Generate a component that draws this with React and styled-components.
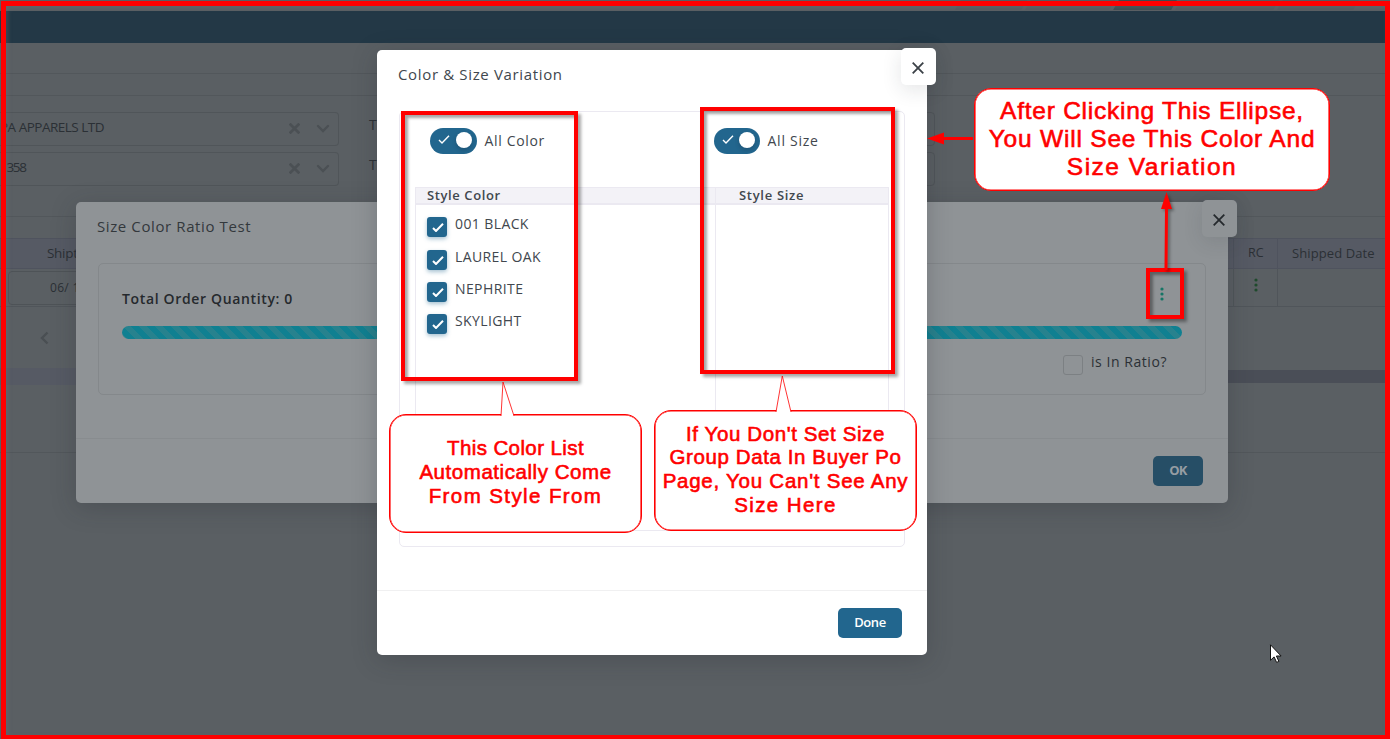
import React from "react";
import styled, { createGlobalStyle } from "styled-components";

const Global = createGlobalStyle`
  * { box-sizing: border-box; }
  body { margin: 0; overflow: hidden; background: #5a5f63; font-family: "Open Sans", "Noto Sans", sans-serif; color: #3b4147; }
`;

const Screen = styled.div`position: relative; width: 1390px; height: 739px; overflow: hidden; background: #5a5f63;`;
const Text = styled.span`
  font-size: ${p => p.$size || 14}px; line-height: 20px; white-space: nowrap;
  font-weight: ${p => p.$weight || 400}; letter-spacing: ${p => p.$gap ?? 0.5}px; color: ${p => p.$color || "#41474e"};
`;

/* page behind the dialogs */
const Page = styled.div`display: flex; flex-direction: column; height: 739px;`;
const Tabs = styled.div`height: 11px; display: flex; justify-content: flex-end; gap: 4px; padding-right: 34px;`;
const Tab = styled.div`width: ${p => p.$w}px; height: 10px; transform: skewX(-30deg); background: ${p => (p.$on ? "#3c4d50" : "#565b5f")};`;
const NavBar = styled.div`height: 32px; background: #233846;`;
const Strip = styled.div`height: ${p => p.$h}px; border-bottom: 1px solid #52575b;`;
const Form = styled.div`display: grid; grid-template-columns: 339px 596px; row-gap: 6px; padding-top: 16px; height: 121px; align-content: start; border-bottom: 1px solid #52575b;`;
const Select = styled.div`
  height: 34px; display: flex; align-items: center; border: 1px solid #505559; border-left: 0; border-radius: 0 4px 4px 0;
  padding: 0 8px 4px ${p => p.$left || 0}px;
  svg { margin-top: 3px; }
  svg:first-of-type { margin-left: auto; margin-right: 16px; }
`;
const Field = styled.div`display: flex; padding-left: 30px; gap: 20px; > span { padding-top: 3px; }`;
const FieldBox = styled(Select)`flex: 1; border-left: 1px solid #505559;`;
const Table = styled.div`display: grid; grid-template-columns: 1234px 44px 1fr; margin-top: 21px;`;
const Th = styled.div`height: 31px; background: #565a64; border: solid #4f535e; border-width: 1px 1px 1px 0; display: flex; align-items: center; padding: 0 0 2px ${p => p.$left}px;`;
const Td = styled.div`height: 38px; border: solid #50555a; border-width: 0 1px 1px 0; display: flex; align-items: center; padding-left: ${p => p.$left}px; padding-bottom: ${p => p.$up || 0}px;`;
const DateBox = styled.div`width: 140px; height: 34px; border: 1px solid #4e5357; border-radius: 4px; display: flex; align-items: center; padding-left: 41px;`;
const Pager = styled.div`height: 61px; padding: 24px 0 0 40px; svg { display: block; }`;
const ScrollTrack = styled.div`height: 17px; display: grid; grid-template-columns: 800px 1fr; background: #565a64; align-items: center;`;
const ScrollThumb = styled.div`grid-column: 2; height: 13px; background: #4a4e57; box-shadow: 0 0 0 2px #5a5f63;`;

/* dialogs */
const Layer = styled.div`position: absolute; inset: 0; padding: ${p => p.$top}px 0 0 ${p => p.$left}px;`;
const Dialog = styled.section`
  position: relative; width: ${p => p.$w}px; height: ${p => p.$h}px; border-radius: 5px; display: flex; flex-direction: column;
  background: ${p => (p.$dim ? "#8f9396" : "#fff")}; box-shadow: 0 5px 24px rgba(34, 41, 47, 0.25);
`;
const Close = styled.div`
  position: absolute; right: -9px; top: -2px; width: 35px; height: 37px; border-radius: 5px; display: flex; align-items: center; justify-content: center; padding: 2px 1px 0 0;
  background: ${p => (p.$dim ? "#8f9396" : "#fff")}; box-shadow: 0 5px 20px rgba(34, 41, 47, 0.12);
`;
const Title = styled.header`padding: 13px 21px 0; height: ${p => p.$h}px;`;
const Footer = styled.footer`margin-top: auto; height: 65px; display: flex; justify-content: flex-end; align-items: center; padding-right: 25px; border-top: 1px solid ${p => (p.$dim ? "#888c8f" : "#f0f0f1")};`;
const Button = styled.div`
  width: ${p => p.$w}px; height: 30px; border-radius: 5px; display: flex; align-items: center; justify-content: center; padding-bottom: 2px;
  background: ${p => (p.$dim ? "#264e66" : "#22668e")};
`;
const RatioCard = styled.div`margin: 0 22px; height: 132px; border: 1px solid #84888b; border-radius: 5px; padding: 25px 23px 0; display: flex; flex-direction: column;`;
const Row = styled.div`display: flex; justify-content: space-between; align-items: center;`;
const DotsCell = styled.div`padding-right: 18px; display: flex; margin-top: -11px;`;
const Progress = styled.div`
  margin-top: 17px; height: 13px; border-radius: 7px; background-color: #108091;
  background-image: linear-gradient(45deg, #27828e 25%, transparent 25%, transparent 50%, #27828e 50%, #27828e 75%, transparent 75%);
  background-size: 16px 16px;
`;
const RatioRow = styled.div`display: flex; justify-content: flex-end; gap: 8px; margin-top: 13px; padding-right: 15px;`;
const EmptyBox = styled.div`width: 20px; height: 20px; margin-top: 3px; border: 1px solid #7c8083; border-radius: 3px;`;

const VariationCard = styled.div`margin: 0 22px; height: 436px; border: 1px solid #ebe9f1; border-radius: 5px; padding: 0 15px;`;
const Switches = styled.div`display: grid; grid-template-columns: 284px 1fr; height: 75px; padding: 16px 0 0 15px;`;
const SwitchItem = styled.div`display: flex; gap: 7.5px; align-items: flex-start; > span { margin-top: 3px; }`;
const Switch = styled.div`width: ${p => p.$w}px; height: 26px; border-radius: 13px; background: #22668e; display: flex; align-items: center; justify-content: space-between; padding: 0 5px 3px 8px;`;
const Knob = styled.div`width: 16px; height: 16px; border-radius: 50%; background: #fff; box-shadow: 0 2px 4px rgba(20, 40, 60, 0.3);`;
const Grid = styled.div`display: grid; grid-template: 17px 325px / 299px 173px; border: 1px solid #ebe9f1;`;
const Head = styled.div`background: #f3f2f7; border-bottom: 2px solid #ebe9f1; padding: 0 0 2px ${p => p.$left}px; height: 17px; display: flex; align-items: center; ${p => p.$line && "border-left: 1px solid #ebe9f1;"}`;
const List = styled.div`padding: 11px 0 0 11px; display: flex; flex-direction: column; gap: 12.3px; ${p => p.$line && "border-left: 1px solid #ebe9f1;"}`;
const Item = styled.div`display: flex; gap: 8px; height: 20px; > span { margin-top: -2px; } &:nth-child(2) { padding-top: 0.6px; }`;
const Check = styled.div`width: 20px; height: 20px; margin-top: 1px; border-radius: 3px; background: #22668e; box-shadow: 0 2px 4px rgba(34, 102, 142, 0.4); display: flex; flex-shrink: 0; align-items: center; justify-content: center; padding: 1px 0 0 1px;`;

/* annotations */
const Frame = styled.div`position: absolute; left: 1px; top: 1px; right: 0; bottom: 0; border: 5px solid #f00; border-bottom-width: 4px; box-shadow: inset 2px 2px 4px rgba(110, 120, 125, 0.3);`;
const Mark = styled.div`
  position: absolute; left: ${p => p.$x}px; top: ${p => p.$y}px; width: ${p => p.$w}px; height: ${p => p.$h}px;
  border: 4px solid #f00; box-shadow: 3px 3px 3px rgba(0, 0, 0, 0.35), inset 3px 3px 3px rgba(0, 0, 0, 0.35);
`;
const Bubble = styled.div`
  position: absolute; left: ${p => p.$x}px; top: ${p => p.$y}px; width: ${p => p.$w}px; height: ${p => p.$h}px;
  border: 1px solid #f00; border-radius: 17px; background: #fff; display: flex; flex-direction: column; justify-content: center; align-items: center;
  padding-bottom: ${p => p.$up || 0}px; box-shadow: inset 0 0 0 0.6px #f00;
`;
const Line = styled.div`
  font-family: "Liberation Sans", Arial, sans-serif; font-size: ${p => p.$size}px; line-height: ${p => p.$lh}px; color: #f00;
  letter-spacing: ${p => p.$gap}px; white-space: nowrap; -webkit-text-stroke: 0.6px #f00;
`;
const Drawing = styled.svg`position: absolute; left: ${p => p.$x}px; top: ${p => p.$y}px; overflow: visible; ${p => p.$shade && "filter: drop-shadow(2px 2px 1.5px rgba(0,0,0,.35));"}`;

const CloseIcon = ({ size = 12, color = "#3b4147", width = 1.8 }) => (
  <svg width={size} height={size} viewBox="0 0 12 12" fill="none" stroke={color} strokeWidth={width}><path d="M.7.7 11.3 11.3M11.3.7.7 11.3" /></svg>
);
const Chevron = () => (
  <svg width="14" height="9" viewBox="0 0 14 9" fill="none" stroke="#4b5054" strokeWidth="2.4" strokeLinecap="round"><path d="m2 2 5 5 5-5" /></svg>
);
const Tick = ({ w = 12, stroke = 2 }) => (
  <svg width={w} height={w * 0.75} viewBox="0 0 12 9" fill="none" stroke="#fff" strokeWidth={stroke}><path d="m1 5 3 3L11 .8" /></svg>
);
const Dots = ({ color }) => (
  <svg width="4" height="14" viewBox="0 0 4 14" fill={color}><circle cx="2" cy="2" r="1.6" /><circle cx="2" cy="7" r="1.6" /><circle cx="2" cy="12" r="1.6" /></svg>
);
const SelectIcons = () => (<><CloseIcon size={11} color="#4b5054" width={3} /><Chevron /></>);

const DIM = "#2b3035";
const colors = ["001 BLACK", "LAUREL OAK", "NEPHRITE", "SKYLIGHT"];

const Callout = ({ lines, size, lh, ...box }) => (
  <Bubble {...box}>
    {lines.map(([text, gap]) => <Line key={text} $size={size} $lh={lh} $gap={gap}>{text}</Line>)}
  </Bubble>
);

export default function App() {
  return (
    <Screen>
      <Global />
      <Page>
        <Tabs><Tab $w={66} /><Tab $w={84} /><Tab $w={58} $on /><Tab $w={98} /><Tab $w={76} /></Tabs>
        <NavBar />
        <Strip $h={31} />
        <Strip $h={22} />
        <Form>
          <Select><Text $size={13.5} $gap={-0.5} $color={DIM}>PA APPARELS LTD</Text><SelectIcons /></Select>
          <Field><Text $color={DIM}>Te</Text><FieldBox /></Field>
          <Select><Text $size={13.5} $gap={-1.3} $color={DIM}>1358</Text><SelectIcons /></Select>
          <Field><Text $color={DIM}>Te</Text><FieldBox /></Field>
        </Form>
        <Table>
          <Th $left={47}><Text $size={13.5} $weight={500} $gap={-0.3} $color={DIM}>Shipt</Text></Th>
          <Th $left={14}><Text $size={12.5} $weight={500} $gap={0} $color={DIM}>RC</Text></Th>
          <Th $left={14}><Text $size={13} $weight={500} $gap={0.1} $color={DIM}>Shipped Date</Text></Th>
          <Td $left={8}><DateBox><Text $size={12} $gap={0.3} $color={DIM}>06/ 14</Text></DateBox></Td>
          <Td $left={20} $up={5}><Dots color="#1f4a2c" /></Td>
          <Td />
        </Table>
        <Pager><svg width="9" height="14" viewBox="0 0 9 14" fill="none" stroke="#4a4f53" strokeWidth="2.4"><path d="M7.500 1.500 2 7l5.500 5.500" /></svg></Pager>
        <ScrollTrack><ScrollThumb /></ScrollTrack>
        <Strip $h={68} />
      </Page>

      <Layer $top={202} $left={76}>
        <Dialog $dim $w={1152} $h={301}>
          <Close $dim><CloseIcon color="#25292d" /></Close>
          <Title $h={61}><Text $size={15} $gap={0.6} $color="#33383c">Size Color Ratio Test</Text></Title>
          <RatioCard>
            <Row><Text $weight={600} $gap={0.65} $color="#25292d">Total Order Quantity: 0</Text><DotsCell><Dots color="#157565" /></DotsCell></Row>
            <Progress />
            <RatioRow><EmptyBox /><Text $gap={0.55} $color={DIM}>is In Ratio?</Text></RatioRow>
          </RatioCard>
          <Footer $dim><Button $dim $w={50}><Text $size={13} $weight={700} $gap={-0.8} $color="#969da3">OK</Text></Button></Footer>
        </Dialog>
      </Layer>

      <Layer $top={50} $left={377}>
        <Dialog $w={550} $h={605}>
          <Close><CloseIcon /></Close>
          <Title $h={61}><Text $size={15} $gap={0.65}>Color &amp; Size Variation</Text></Title>
          <VariationCard>
            <Switches>
              <SwitchItem><Switch $w={47}><Tick w={12} stroke={1.4} /><Knob /></Switch><Text $gap={0.65}>All Color</Text></SwitchItem>
              <SwitchItem><Switch $w={46}><Tick w={12} stroke={1.4} /><Knob /></Switch><Text $gap={0.75}>All Size</Text></SwitchItem>
            </Switches>
            <Grid>
              <Head $left={11}><Text $size={13} $weight={600} $gap={0.6}>Style Color</Text></Head>
              <Head $left={23} $line><Text $size={13} $weight={600} $gap={0.7}>Style Size</Text></Head>
              <List>{colors.map(c => <Item key={c}><Check><Tick w={12} /></Check><Text $gap={0.4}>{c}</Text></Item>)}</List>
              <List $line />
            </Grid>
          </VariationCard>
          <Footer><Button $w={64}><Text $size={13} $weight={600} $gap={-0.4} $color="#fff">Done</Text></Button></Footer>
        </Dialog>
      </Layer>

      <Frame />
      <Mark $x={401} $y={111} $w={177} $h={270} />
      <Mark $x={700} $y={107} $w={195} $h={267} />
      <Mark $x={1146} $y={268} $w={38} $h={51} />
      <Callout $x={974} $y={88} $w={356} $h={103} $up={2} size={24.5} lh={28}
        lines={[["After Clicking This Ellipse,", 0.75], ["You Will See This Color And", 0.8], ["Size Variation", 1.5]]} />
      <Callout $x={389} $y={414} $w={253} $h={119} $up={4} size={20.5} lh={24}
        lines={[["This Color List", 0.4], ["Automatically Come", 0.55], ["From Style From", 1.4]]} />
      <Callout $x={654} $y={410} $w={263} $h={121} $up={3} size={20.5} lh={23.7}
        lines={[["If You Don't Set Size", 0.6], ["Group Data In Buyer Po", 0.6], ["Page, You Can't See Any", 0.75], ["Size Here", 1.4]]} />
      <Drawing $x={501} $y={382} width="13" height="35" viewBox="0 0 13 35"><path d="M0 34 2 0l11 34" fill="#fff" stroke="#f00" strokeWidth=".8" /></Drawing>
      <Drawing $x={776} $y={376} width="15" height="37" viewBox="0 0 15 37"><path d="M0 36 6.300 0 15 36" fill="#fff" stroke="#f00" strokeWidth=".8" /></Drawing>
      <Drawing $x={927} $y={132} width="47" height="13" viewBox="0 0 47 13"><path d="M0 6.500 17 0.500v4.500h29v3H17v4.500Z" fill="#f00" /></Drawing>
      <Drawing $shade $x={1160} $y={192} width="13" height="78" viewBox="0 0 13 78"><path d="M6.500 0 12 17H8L7.500 78h-3L5 17H1Z" fill="#f00" /></Drawing>
      <Drawing $x={1270} $y={644} width="12" height="19" viewBox="0 0 12 19"><path d="M.5.8v15.500l3.600-3.400 2.500 5.500 2.300-1-2.500-5.400h4.700Z" fill="#fff" stroke="#111" strokeWidth="1" /></Drawing>
    </Screen>
  );
}
